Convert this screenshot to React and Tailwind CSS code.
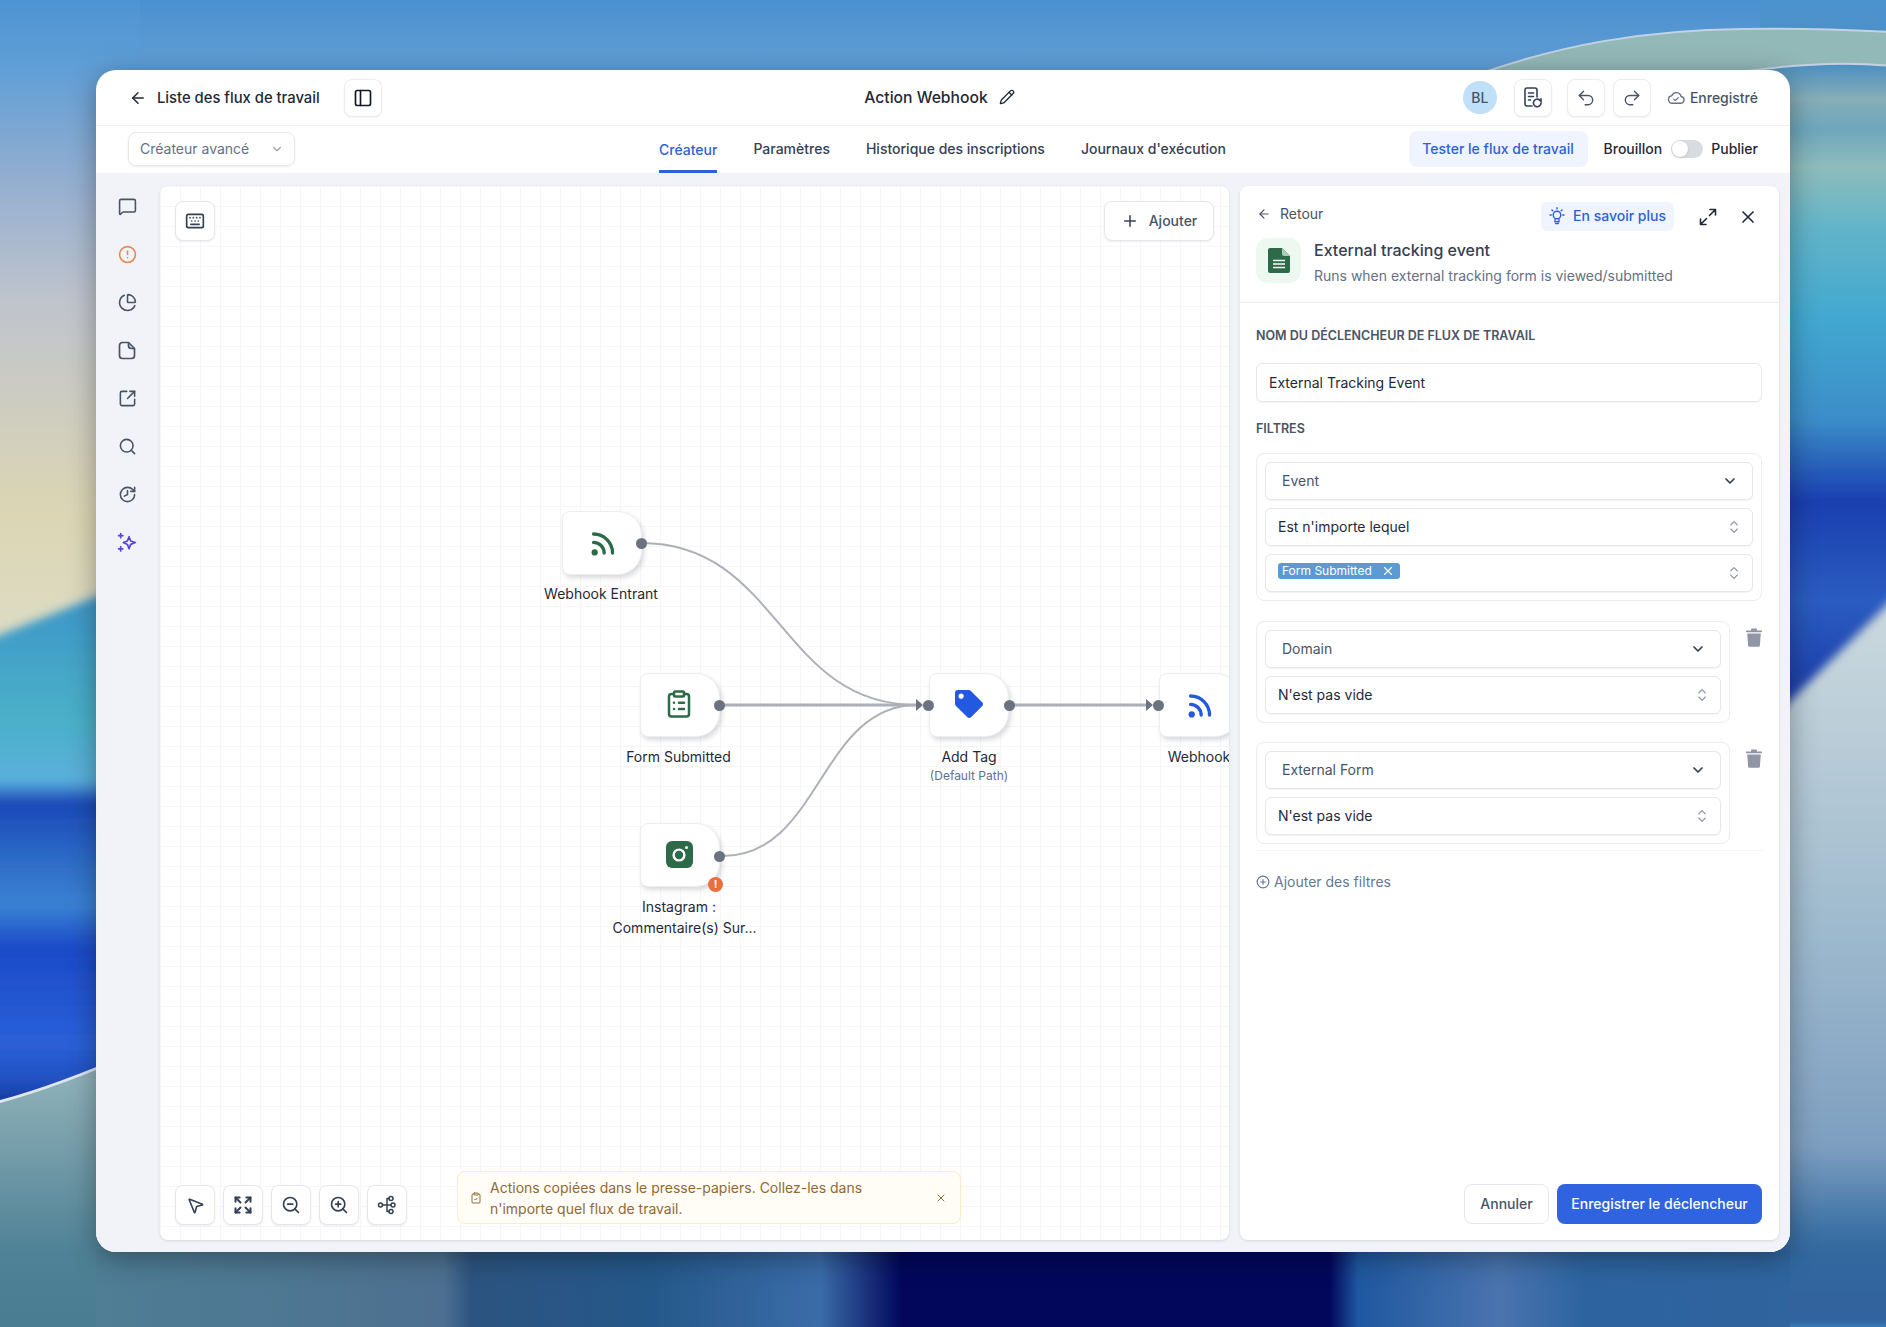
import React from "react";
import {
  ArrowLeft,
  PanelLeft,
  Pencil,
  Undo2,
  Redo2,
  ChevronDown,
  ChevronsUpDown,
  MessageSquare,
  CircleAlert,
  PieChart,
  SquareArrowOutUpRight,
  Search,
  History,
  Keyboard,
  Plus,
  MousePointer2,
  Expand,
  ZoomIn,
  ZoomOut,
  ClipboardList,
  ClipboardCheck,
  CirclePlus,
  X,
} from "lucide-react";
import { FaTag } from "react-icons/fa";

// wallpaper ----------------------------------------------------------------------------------------------------
const Wallpaper = () => (
  <svg className="absolute inset-0" width="1886" height="1327" viewBox="0 0 1886 1327">
    <defs>
      <linearGradient id="sky" x1="0" y1="0" x2="0" y2="1">
        <stop offset="0" stopColor="#4d94d2" />
        <stop offset="0.1" stopColor="#5f9ed6" />
        <stop offset="0.27" stopColor="#93aed0" />
        <stop offset="0.46" stopColor="#c0c4cc" />
        <stop offset="0.78" stopColor="#dcd6b4" />
        <stop offset="1" stopColor="#dcdcc6" />
      </linearGradient>
      <linearGradient id="sea" x1="0" y1="570" x2="0" y2="1110" gradientUnits="userSpaceOnUse">
        <stop offset="0" stopColor="#3a90c8" />
        <stop offset="0.28" stopColor="#4bb0c8" />
        <stop offset="0.39" stopColor="#5ab0dc" />
        <stop offset="0.43" stopColor="#1a48b8" />
        <stop offset="0.52" stopColor="#2a66c4" />
        <stop offset="0.62" stopColor="#3a82d4" />
        <stop offset="0.7" stopColor="#1c4ac8" />
        <stop offset="0.88" stopColor="#2a60d8" />
        <stop offset="0.96" stopColor="#1e4cb8" />
        <stop offset="1" stopColor="#0c2a80" />
      </linearGradient>
      <linearGradient id="sand" x1="0" y1="1060" x2="0" y2="1327" gradientUnits="userSpaceOnUse">
        <stop offset="0" stopColor="#94b6bc" />
        <stop offset="0.4" stopColor="#6f98a6" />
        <stop offset="0.72" stopColor="#4f8296" />
        <stop offset="1" stopColor="#4a7c92" />
      </linearGradient>
      <linearGradient id="rightSea" x1="0" y1="0" x2="0" y2="760" gradientUnits="userSpaceOnUse">
        <stop offset="0" stopColor="#4c92d0" />
        <stop offset="0.085" stopColor="#4d8fc0" />
        <stop offset="0.13" stopColor="#86aeb8" />
        <stop offset="0.17" stopColor="#6ea6bc" />
        <stop offset="0.22" stopColor="#8ebcbc" />
        <stop offset="0.3" stopColor="#62b4c8" />
        <stop offset="0.42" stopColor="#42a8d0" />
        <stop offset="0.55" stopColor="#3c8ec8" />
        <stop offset="0.66" stopColor="#1a3fb0" />
        <stop offset="0.79" stopColor="#2a5cc0" />
        <stop offset="0.92" stopColor="#1c3da8" />
        <stop offset="1" stopColor="#1c3da8" />
      </linearGradient>
      <linearGradient id="rightSand" x1="0" y1="600" x2="0" y2="1327" gradientUnits="userSpaceOnUse">
        <stop offset="0" stopColor="#ccd9de" />
        <stop offset="0.4" stopColor="#a4bed0" />
        <stop offset="0.75" stopColor="#7e9fc0" />
        <stop offset="0.87" stopColor="#3c70a4" />
        <stop offset="0.9" stopColor="#32679e" />
        <stop offset="1" stopColor="#2f629c" />
      </linearGradient>
      <linearGradient id="bottomBand" x1="0" y1="0" x2="1886" y2="0" gradientUnits="userSpaceOnUse">
        <stop offset="0" stopColor="#4f8296" />
        <stop offset="0.235" stopColor="#4d7090" />
        <stop offset="0.25" stopColor="#2c5480" />
        <stop offset="0.345" stopColor="#25588a" />
        <stop offset="0.435" stopColor="#3b6ca8" />
        <stop offset="0.478" stopColor="#02075c" />
        <stop offset="0.705" stopColor="#02075c" />
        <stop offset="0.72" stopColor="#1f58a0" />
        <stop offset="0.795" stopColor="#4a74ae" />
        <stop offset="0.84" stopColor="#2d64a0" />
        <stop offset="1" stopColor="#30649c" />
      </linearGradient>
      <linearGradient id="topBand" x1="0" y1="0" x2="0" y2="72" gradientUnits="userSpaceOnUse">
        <stop offset="0" stopColor="#4a90d0" />
        <stop offset="1" stopColor="#639fd6" />
      </linearGradient>
      <filter id="soft">
        <feGaussianBlur stdDeviation="5" />
      </filter>
    </defs>
    <rect x="0" y="0" width="943" height="660" fill="url(#sky)" />
    <path d="M-20 643 L200 555 V1110 H-20 Z" fill="url(#sea)" filter="url(#soft)" />
    <path d="M-10 1104 C40 1092 90 1072 140 1050 V1340 H-10 Z" fill="url(#sand)" stroke="#dfe6f2" strokeWidth="3" />
    <rect x="1700" y="0" width="186" height="760" fill="url(#rightSea)" />
    <path d="M1700 790 L1900 592 V1327 H1700 Z" fill="url(#rightSand)" filter="url(#soft)" />
    <rect x="140" y="0" width="1620" height="72" fill="url(#topBand)" />
    <path d="M1485 72 C1560 46 1640 30 1744 29 C1800 28 1850 30 1890 32 V66 C1860 63 1810 62 1740 72 Z" fill="#93b8b8" stroke="#c3d2e2" strokeWidth="2" />
    <rect x="96" y="1250" width="1694" height="77" fill="url(#bottomBand)" />
  </svg>
);

// small custom icons -------------------------------------------------------------------------------------------
const NotesIcon = () => (
  <svg width="20" height="22" viewBox="0 0 20 22" fill="none" stroke="#344054" strokeWidth="1.6" strokeLinecap="round">
    <path d="M9 19H4a2 2 0 0 1-2-2V3a2 2 0 0 1 2-2h8a2 2 0 0 1 2 2v7" />
    <path d="M5.5 6h5M5.5 9.5h5M5.5 13h2" />
    <path d="M18 16a3.8 3.8 0 1 1-1.2-2.8L18 14.4V11.8" />
  </svg>
);

const CloudCheckIcon = () => (
  <svg width="18" height="18" viewBox="0 0 24 24" fill="none" stroke="#667085" strokeWidth="1.8" strokeLinecap="round" strokeLinejoin="round">
    <path d="M17.5 19H7a5 5 0 0 1-.6-9.96A6.5 6.5 0 0 1 18.8 10a4.5 4.5 0 0 1-1.3 9Z" />
    <path d="m9 13.5 2 2 4-4" />
  </svg>
);

const NoteIcon = () => (
  <svg width="18" height="19" viewBox="0 0 18 19" fill="none" stroke="#475467" strokeWidth="1.7" strokeLinejoin="round">
    <path d="M10.5 1.5H4.5a3 3 0 0 0-3 3v10a3 3 0 0 0 3 3h9a3 3 0 0 0 3-3V7.5L10.5 1.5Z" />
    <path d="M10.5 1.5v3a3 3 0 0 0 3 3h3" />
  </svg>
);

const SparkIcon = () => (
  <svg width="21" height="21" viewBox="0 0 20 20" fill="none" stroke="#5b45d6" strokeWidth="1.6" strokeLinejoin="round" strokeLinecap="round">
    <path d="M11.5 4.5 13 8.5l4.5 1.5L13 11.8l-1.5 4.2-1.6-4.2L6 10l3.9-1.5Z" />
    <path d="M3.5 1.5v4M1.5 3.5h4M3.5 14v4M1.5 16h4" />
  </svg>
);

const TreeIcon = () => (
  <svg width="20" height="20" viewBox="0 0 20 20" fill="none" stroke="#344054" strokeWidth="1.5" strokeLinecap="round">
    <circle cx="3.5" cy="10" r="2" />
    <circle cx="14" cy="3.5" r="2" />
    <circle cx="16" cy="10" r="2" />
    <circle cx="14" cy="16.5" r="2" />
    <path d="M5.5 10H14M10 3.5h2M10 16.5h2M10 3.5v13" />
  </svg>
);

const BulbIcon = () => (
  <svg width="16" height="18" viewBox="0 0 16 18" fill="none" stroke="#2f5fd8" strokeWidth="1.4" strokeLinecap="round">
    <circle cx="8" cy="8" r="3.8" />
    <path d="M6 12.5v2.2h4v-2.2M6.5 16.6h3M8 .8v1.2M1 8h1.3M13.7 8H15M2.9 2.9l.9.9M13.1 2.9l-.9.9" />
  </svg>
);

const DiagonalExpand = () => (
  <svg width="18" height="18" viewBox="0 0 18 18" fill="none" stroke="#1f2937" strokeWidth="1.6" strokeLinecap="round" strokeLinejoin="round">
    <path d="M10.5 7.5 16.5 1.5M11 1.5h5.5V7" />
    <path d="M7.5 10.5 1.5 16.5M1.5 11v5.5H7" />
  </svg>
);

const TrashIcon = () => (
  <svg width="16" height="19" viewBox="0 0 16 19" fill="#9096a6">
    <rect x="0" y="2.4" width="16" height="1.8" rx="0.6" />
    <rect x="5" y="0.6" width="6" height="2.4" rx="0.8" />
    <path d="M1.2 5.4h13.6l-.9 12a1.4 1.4 0 0 1-1.4 1.3H3.5a1.4 1.4 0 0 1-1.4-1.3Z" />
  </svg>
);

const DocIcon = () => (
  <svg width="22" height="25" viewBox="0 0 22 25">
    <path d="M2 0h12l8 8v15a2 2 0 0 1-2 2H2a2 2 0 0 1-2-2V2a2 2 0 0 1 2-2Z" fill="#2d6a47" />
    <path d="M14 0l8 8h-6a2 2 0 0 1-2-2Z" fill="#a9cdb8" />
    <path d="M5 12.5h12M5 16h12M5 19.5h12" stroke="#fff" strokeWidth="1.6" />
  </svg>
);

const RssIcon = ({ colour }) => (
  <svg width="29" height="29" viewBox="0 0 26 26" fill="none" stroke={colour} strokeWidth="3" strokeLinecap="round">
    <circle cx="6" cy="21" r="2.8" fill={colour} stroke="none" />
    <path d="M5 12a9.5 9.5 0 0 1 9.5 9.5" />
    <path d="M5 4.5a17 17 0 0 1 17 17" />
  </svg>
);

const InstagramIcon = () => (
  <svg width="27" height="27" viewBox="0 0 27 27" className="-ml-[2px] -mt-[2px]">
    <rect width="27" height="27" rx="6" fill="#2d6a47" />
    <circle cx="13" cy="14" r="5.4" fill="none" stroke="#fff" strokeWidth="2.4" />
    <circle cx="20.5" cy="6.5" r="1.5" fill="#fff" />
  </svg>
);

// shared bits --------------------------------------------------------------------------------------------------
const IconButton = ({ children, className = "" }) => (
  <button className={`flex h-[40px] w-[40px] items-center justify-center rounded-lg border border-[#e4e7ec] bg-white shadow-[0_1px_2px_rgba(16,24,40,0.08)] ${className}`}>
    {children}
  </button>
);

const HeadButton = ({ children, className = "" }) => (
  <button className={`flex h-[38px] w-[38px] items-center justify-center rounded-lg border border-[#eaecf0] bg-white shadow-[0_1px_2px_rgba(16,24,40,0.06)] ${className}`}>
    {children}
  </button>
);

const SelectRow = ({ label }) => (
  <div className="flex h-[38px] items-center justify-between rounded-md border border-[#e4e7ec] bg-white pl-[16px] pr-[14px] text-sm text-[#475467] shadow-[0_1px_1px_rgba(16,24,40,0.05)]">
    <span>{label}</span>
    <ChevronDown size={16} strokeWidth={2.6} color="#344054" />
  </div>
);

const ComboRow = ({ label, children }) => (
  <div className="flex h-[38px] items-center justify-between rounded-md border border-[#e4e7ec] bg-white pl-[12px] pr-[10px] text-sm text-[#1f2937] shadow-[0_1px_1px_rgba(16,24,40,0.05)]">
    {children || <span>{label}</span>}
    <ChevronsUpDown size={16} strokeWidth={1.6} color="#8a94a6" />
  </div>
);

const Node = ({ left, top, children }) => (
  <div
    className="absolute flex h-[64px] w-[80px] items-center justify-center rounded-l-lg rounded-r-[24px] border border-[#eceef2] bg-white shadow-[2px_3px_5px_rgba(16,24,40,0.16)]"
    style={{ left, top }}
  >
    {children}
  </div>
);

const Handle = ({ x, y }) => (
  <div
    className="absolute h-[11px] w-[11px] rounded-full bg-[#6b7280]"
    style={{ left: x - 5.5, top: y - 5.5 }}
  />
);

const NodeLabel = ({ x, y, children }) => (
  <div
    className="absolute w-[160px] text-center text-sm leading-[21px] text-[#1f2937]"
    style={{ left: x - 80, top: y }}
  >
    {children}
  </div>
);

// canvas -------------------------------------------------------------------------------------------------------
const Canvas = () => (
  <div className="relative h-[1054px] w-[1069px] overflow-hidden rounded-lg bg-white bg-[linear-gradient(#f6f6f8_1px,transparent_1px),linear-gradient(90deg,#f6f6f8_1px,transparent_1px)] bg-[size:20px_20px] shadow-[0_1px_3px_rgba(16,24,40,0.12)]">
    <IconButton className="absolute left-[15px] top-[15px]">
      <Keyboard size={20} color="#344054" />
    </IconButton>
    <button className="absolute right-[15px] top-[15px] flex h-[40px] w-[110px] items-center justify-center gap-[10px] rounded-lg border border-[#e4e7ec] bg-white text-sm font-medium text-[#475467] shadow-[0_1px_2px_rgba(16,24,40,0.08)]">
      <Plus size={18} color="#344054" />
      Ajouter
    </button>

    {/* edges */}
    <svg className="absolute inset-0" width="1069" height="1054" fill="none" stroke="#adb0b7" strokeWidth="2">
      <path d="M481 357 C620 357 619 519 757 519" />
      <path d="M563 519 H757" strokeWidth="3" />
      <path d="M563 670 C660 670 660 519 757 519" />
      <path d="M854 519 H987" strokeWidth="3" />
      <path d="M756 513 L763 519 L756 525 Z" fill="#6b7280" stroke="none" />
      <path d="M986 513 L993 519 L986 525 Z" fill="#6b7280" stroke="none" />
    </svg>

    <Node left={402} top={325}>
      <RssIcon colour="#2d6a47" />
    </Node>
    <Handle x={481} y={357} />
    <NodeLabel x={441} y={397}>Webhook Entrant</NodeLabel>

    <Node left={480} top={487}>
      <ClipboardList size={30} color="#2d6a47" strokeWidth={2} className="-ml-[2px] -mt-[2px]" />
    </Node>
    <Handle x={559} y={519} />
    <NodeLabel x={518.5} y={560}>Form Submitted</NodeLabel>

    <Node left={769} top={487}>
      <FaTag size={28} color="#2359e0" className="-mt-[2px]" />
    </Node>
    <Handle x={768} y={519} />
    <Handle x={849} y={519} />
    <NodeLabel x={809} y={560}>
      Add Tag
      <div className="text-xs leading-[18px] text-[#667085]">(Default Path)</div>
    </NodeLabel>

    <Node left={999} top={487}>
      <RssIcon colour="#2359e0" />
    </Node>
    <Handle x={998} y={519} />
    <NodeLabel x={1039} y={560}>Webhook</NodeLabel>

    <Node left={480} top={637}>
      <InstagramIcon />
    </Node>
    <Handle x={559} y={670} />
    <div className="absolute left-[548px] top-[691px] flex h-[15px] w-[15px] items-center justify-center rounded-full bg-[#e9703a] text-[11px] font-bold leading-none text-white">
      !
    </div>
    <NodeLabel x={519} y={710}>
      Instagram :
      <div className="ml-[11px] whitespace-nowrap">Commentaire(s) Sur...</div>
    </NodeLabel>

    {/* bottom tools */}
    <div className="absolute bottom-[15px] left-[15px] flex gap-[8px]">
      <IconButton>
        <MousePointer2 size={19} color="#344054" />
      </IconButton>
      <IconButton>
        <Expand size={20} color="#344054" strokeWidth={2.4} />
      </IconButton>
      <IconButton>
        <ZoomOut size={20} color="#344054" />
      </IconButton>
      <IconButton>
        <ZoomIn size={20} color="#344054" />
      </IconButton>
      <IconButton>
        <TreeIcon />
      </IconButton>
    </div>

    {/* toast */}
    <div className="absolute left-[297px] top-[985px] flex h-[53px] w-[504px] items-center rounded-lg border border-[#fbeec2] bg-[#fffdf6] pl-[12px] pr-[13px] text-sm leading-[21px] text-[#8f6a35]">
      <ClipboardCheck size={12} color="#8f6a35" className="shrink-0" />
      <p className="ml-[8px] w-[385px]">
        Actions copiées dans le presse-papiers. Collez-les dans n'importe quel flux de travail.
      </p>
      <X size={12} color="#8f6a35" className="ml-auto" />
    </div>
  </div>
);

// right panel --------------------------------------------------------------------------------------------------
const TriggerPanel = () => (
  <div className="flex h-[1054px] w-[539px] flex-col rounded-lg bg-white shadow-[0_1px_3px_rgba(16,24,40,0.12)]">
    {/* panel header */}
    <div className="border-b border-[#e9ebef] pb-[19px]">
      <div className="flex items-center pl-[17px] pr-[21px] pt-[16px]">
        <div className="-mt-[5px] flex items-center gap-[9px] text-sm text-[#475467]">
          <ArrowLeft size={14} color="#475467" />
          <span>Retour</span>
        </div>
        <button className="ml-auto flex h-[29px] w-[133px] items-center justify-center gap-[8px] rounded-md bg-[#eff4ff] pb-[1px] text-sm font-medium text-[#2f5fd8]">
          <BulbIcon />
          En savoir plus
        </button>
        <span className="ml-[25px]">
          <DiagonalExpand />
        </span>
        <X size={20} color="#1f2937" className="ml-[21px]" />
      </div>
      <div className="mt-[7px] flex items-start pl-[16px]">
        <div className="flex h-[45px] w-[45px] items-center justify-center rounded-xl bg-[#edf8f1]">
          <DocIcon />
        </div>
        <div className="ml-[13px] h-[45px]">
          <div className="text-base font-medium leading-[24px] text-[#344054]">External tracking event</div>
          <div className="mt-[3px] text-sm leading-[21px] text-[#667085]">Runs when external tracking form is viewed/submitted</div>
        </div>
      </div>
    </div>

    {/* form */}
    <div className="flex flex-1 flex-col px-[16px] pb-[16px]">
      <div className="mt-[25px] text-[12.5px] font-semibold uppercase leading-[16px] text-[#475467]">
        Nom du déclencheur de flux de travail
      </div>
      <div className="mt-[19px] flex h-[39px] w-[506px] items-center rounded-md border border-[#e4e7ec] pl-[12px] text-sm text-[#1f2937] shadow-[0_1px_1px_rgba(16,24,40,0.05)]">
        External Tracking Event
      </div>
      <div className="mt-[19px] text-[12.5px] font-semibold uppercase leading-[16px] text-[#475467]">Filtres</div>

      <div className="mt-[16px] flex w-[506px] flex-col gap-[8px] rounded-lg border border-[#eaecf0] p-[8px]">
        <SelectRow label="Event" />
        <ComboRow label="Est n'importe lequel" />
        <ComboRow>
          <span className="-mt-[4px] flex h-[16px] w-[122px] items-center justify-between rounded-[3px] bg-[#5b9bd5] pl-[4px] pr-[5px] text-xs leading-none text-white">
            Form Submitted
            <X size={14} color="#fff" strokeWidth={2} />
          </span>
        </ComboRow>
      </div>

      <div className="mt-[20px] flex items-start">
        <div className="flex w-[474px] flex-col gap-[8px] rounded-lg border border-[#eaecf0] p-[8px]">
          <SelectRow label="Domain" />
          <ComboRow label="N'est pas vide" />
        </div>
        <span className="ml-[16px] mt-[7px]">
          <TrashIcon />
        </span>
      </div>

      <div className="mt-[19px] flex items-start border-b border-[#f4f5f7] pb-[6px]">
        <div className="flex w-[474px] flex-col gap-[8px] rounded-lg border border-[#eaecf0] p-[8px]">
          <SelectRow label="External Form" />
          <ComboRow label="N'est pas vide" />
        </div>
        <span className="ml-[16px] mt-[7px]">
          <TrashIcon />
        </span>
      </div>

      <div className="mt-[21px] flex items-center gap-[4px] text-sm leading-[20px] text-[#64789a]">
        <CirclePlus size={14} color="#64789a" />
        Ajouter des filtres
      </div>

      <div className="mt-auto flex justify-end gap-[8px] pr-[1px]">
        <button className="h-[40px] w-[85px] rounded-lg border border-[#e4e7ec] bg-white text-sm font-medium text-[#475467]">
          Annuler
        </button>
        <button className="h-[40px] w-[205px] rounded-lg bg-[#2f63e0] text-sm font-medium text-white">
          Enregistrer le déclencheur
        </button>
      </div>
    </div>
  </div>
);

// page ---------------------------------------------------------------------------------------------------------
export default function App() {
  return (
    <div className="relative h-[1327px] w-[1886px] overflow-hidden bg-[#4d94d2] font-['Inter',sans-serif]">
      <Wallpaper />
      <div className="relative pl-[96px] pt-[70px]">
        <div className="flex h-[1182px] w-[1694px] flex-col overflow-hidden rounded-[20px] bg-white shadow-[0_6px_28px_rgba(0,0,0,0.35)]">
          {/* top bar */}
          <div className="grid h-[56px] grid-cols-[1fr_auto_1fr] items-center border-b border-[#eef0f3] pl-[33px] pr-[32px]">
            <div className="flex items-center">
              <ArrowLeft size={18} color="#1f2937" />
              <span className="ml-[10px] pt-px text-[14.8px] font-medium text-[#1f2937]">Liste des flux de travail</span>
              <HeadButton className="ml-[24px]">
                <PanelLeft size={20} color="#111827" strokeWidth={2} />
              </HeadButton>
            </div>
            <div className="flex items-center gap-[11px] pr-[8px] text-[15.7px] font-medium text-[#1f2937]">
              Action Webhook
              <Pencil size={16} color="#1f2937" />
            </div>
            <div className="flex items-center justify-end">
              <div className="flex h-[33px] w-[34px] items-center justify-center rounded-full bg-[#bfe0f8] text-sm font-medium text-[#475467]">
                BL
              </div>
              <HeadButton className="ml-[17px]">
                <NotesIcon />
              </HeadButton>
              <HeadButton className="ml-[15px]">
                <Undo2 size={20} color="#475467" strokeWidth={1.7} />
              </HeadButton>
              <HeadButton className="ml-[8px]">
                <Redo2 size={20} color="#475467" strokeWidth={1.7} />
              </HeadButton>
              <span className="ml-[16px]">
                <CloudCheckIcon />
              </span>
              <span className="ml-[5px] text-sm font-medium text-[#475467]">Enregistré</span>
            </div>
          </div>

          {/* tab bar */}
          <div className="flex h-[47px] items-center pb-px pl-[32px] pr-[32px]">
            <div className="flex h-[34px] w-[167px] items-center justify-between rounded-lg border border-[#e4e7ec] pl-[11px] pr-[10px] text-sm text-[#667085] shadow-[0_1px_2px_rgba(16,24,40,0.08)]">
              Créateur avancé
              <ChevronDown size={14} color="#98a2b3" />
            </div>
            <div className="ml-[364px] flex h-full items-center gap-[36px] text-sm font-medium text-[#344054]">
              <span className="-mb-px flex h-full items-center border-b-[3px] border-[#2f5fd8] pt-[3px] text-[#2f5fd8]">Créateur</span>
              <span>Paramètres</span>
              <span>Historique des inscriptions</span>
              <span>Journaux d'exécution</span>
            </div>
            <button className="ml-auto h-[36px] w-[179px] rounded-lg bg-[#eff4ff] text-sm font-medium text-[#2f5fd8]">
              Tester le flux de travail
            </button>
            <span className="ml-[16px] text-sm font-medium text-[#1f2937]">Brouillon</span>
            <div className="ml-[9px] flex h-[18px] w-[32px] items-center rounded-full bg-[#d8dbe0] pl-[1px]">
              <div className="h-[16px] w-[16px] rounded-full bg-white shadow-sm" />
            </div>
            <span className="ml-[8px] text-sm font-medium text-[#1f2937]">Publier</span>
          </div>

          {/* workspace */}
          <div className="flex flex-1 bg-[#f1f3f8]">
            <div className="flex w-[64px] flex-col items-center pr-[2px] pt-[9px]">
              <div className="flex h-[48px] items-center"><MessageSquare size={19} color="#475467" /></div>
              <div className="flex h-[48px] items-center"><CircleAlert size={19} color="#e48a4e" /></div>
              <div className="flex h-[48px] items-center"><PieChart size={19} color="#475467" /></div>
              <div className="flex h-[48px] items-center"><NoteIcon /></div>
              <div className="flex h-[48px] items-center"><SquareArrowOutUpRight size={19} color="#475467" /></div>
              <div className="flex h-[48px] items-center"><Search size={19} color="#475467" /></div>
              <div className="flex h-[48px] items-center"><History size={19} color="#475467" className="-scale-x-100" /></div>
              <div className="flex h-[48px] items-center"><SparkIcon /></div>
            </div>
            <div className="flex gap-[11px] pt-[13px]">
              <Canvas />
              <TriggerPanel />
            </div>
          </div>
        </div>
      </div>
    </div>
  );
}
